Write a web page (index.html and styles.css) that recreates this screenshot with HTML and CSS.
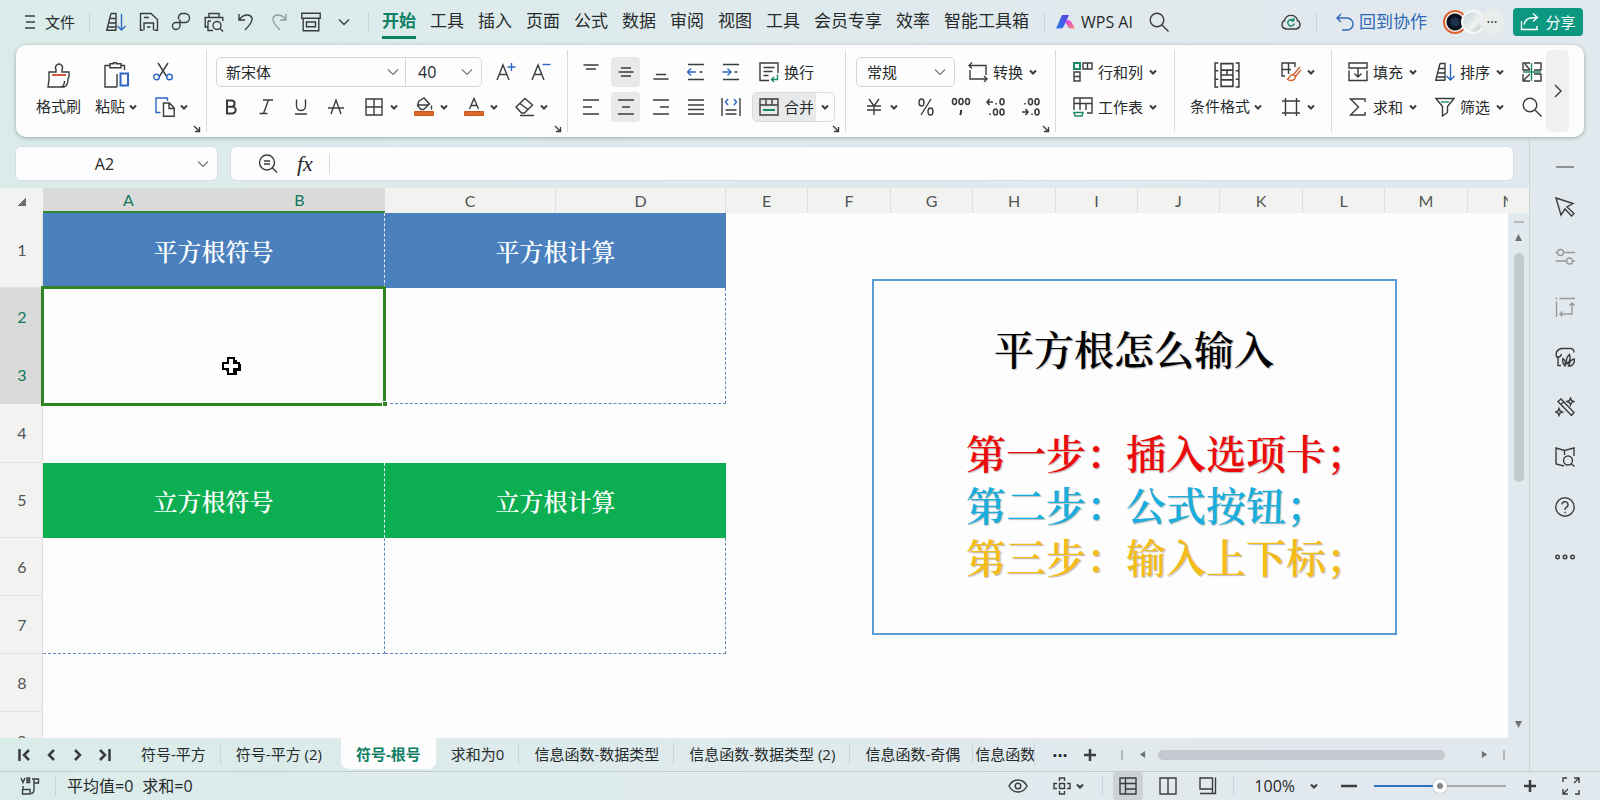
FILE: index.html
```html
<!DOCTYPE html>
<html lang="zh-CN">
<head>
<meta charset="utf-8">
<title>符号-根号</title>
<link rel="stylesheet" href="styles.css">
</head>
<body>
<svg class="sprite" aria-hidden="true">
  <symbol id="caret" viewBox="0 0 10 10"><path d="M2 3.5l3 3 3-3" stroke-width="2"/></symbol>
  <symbol id="chev" viewBox="0 0 12 12"><path d="M1 3.5l5 5 5-5"/></symbol>
  <symbol id="menu" viewBox="0 0 12 16"><path d="M1 2h10M2 8h9M1 14h10"/></symbol>
  <symbol id="sort" viewBox="0 0 20 20"><path d="M5 1.500h5v17M5 1.500L.700 18.300H10M4 6.500h6M2.700 11h7.300M1.700 15h8.300"/><path class="blue" d="M15.500 2v16M11.500 14l4 4 4-4"/></symbol>
  <symbol id="save" viewBox="0 0 20 20"><path d="M4 18.200H1.500V1.500h10.500l6.500 6v10.700H15.500M5 18.200V11h9.500v7.200M5 5.500h5M8 15h3.500"/></symbol>
  <symbol id="pout" viewBox="0 0 20 20"><path d="M7.500 7.500V5.500a4 4 0 0 1 4-4H14a4.500 4.500 0 0 1 0 9H5a3.500 3.500 0 0 0 0 7 4 4 0 0 0 4-4V7.500"/></symbol>
  <symbol id="print" viewBox="0 0 20 20"><path d="M5 5.500V1.500h10v4M4 15H1.200V5.500h17.600V9M4 9h3M4 9v9.500h5"/><circle cx="13" cy="13.500" r="4"/><path d="M16 16.500l3 3"/></symbol>
  <symbol id="undo" viewBox="0 0 20 20"><path d="M3 2v6h6M3.500 7.500C7 2 14.500 1.500 16 6c1 3.500-2 7-7 12"/></symbol>
  <symbol id="redo" viewBox="0 0 20 20"><path d="M17 2v6h-6M16.500 7.500C13 2 5.500 1.500 4 6c-1 3.500 2 7 7 12"/></symbol>
  <symbol id="archive" viewBox="0 0 20 20"><path d="M.800 1.200h18.400v5H.800zM2.200 6.200v12.600h15.600V6.200M5.500 10h9v4.800h-9z"/></symbol>
  <symbol id="search" viewBox="0 0 20 20"><circle cx="8" cy="8" r="6.800"/><path d="M13 13l6.500 6.500"/></symbol>
  <symbol id="cloud" viewBox="0 0 20 20"><path d="M5 17a4.500 4.500 0 0 1-1.500-8.500A6.700 6.700 0 0 1 16.500 8.500 4.500 4.500 0 0 1 15 17z"/><path class="green" d="M12.500 8.500a3.300 3.300 0 1 0 .800 3M9.800 8.800h3V6"/></symbol>
  <symbol id="back" viewBox="0 0 20 20"><path d="M6 2L2 6l4 4M2 6h10a6 6 0 0 1 0 12H7"/></symbol>
  <symbol id="share" viewBox="0 0 20 20"><path d="M1.500 9v8.500h15.500V14M4 12.500C5 7.500 8 5.500 17 5.500M13 1.500l4.500 4-4.500 4"/></symbol>
  <symbol id="brush" viewBox="0 0 24 26"><path d="M2 18l-1 7h16c3-1 4-4 4-8l1-2M2 18V10h7V7.500a3.500 3.500 0 1 1 6 0V10h7v5M14.500 25c2-1 3-3 3-6"/><path class="red" d="M5 13h14" stroke-width="2"/></symbol>
  <symbol id="paste" viewBox="0 0 26 26"><path d="M6 3.500H1v21.500h12M17 3.500h3.500V8M6 1.800h3.500V.800h3v1h4.500v4H6zM13 25V12"/><path class="blue" d="M16.500 11.500h7.500v12h-7.500z" stroke-width="2"/></symbol>
  <symbol id="cut" viewBox="0 0 20 20"><path d="M5 1l9 14M15 1L6 15"/><circle class="blue" cx="3.500" cy="15" r="2.800"/><circle class="blue" cx="16.500" cy="15" r="2.800"/></symbol>
  <symbol id="copy" viewBox="0 0 20 20"><path class="blue" d="M5.500 15.500H1V1h11.500v3"/><path d="M8.500 6h6l4.700 5v8.300H8.500zM14 6v5.500h5"/></symbol>
  <symbol id="aplus" viewBox="0 0 20 20"><path d="M1 18L7 3l6 15M3.500 12.500h7"/><path class="blue" d="M15.500 1v8M11.500 5h8"/></symbol>
  <symbol id="aminus" viewBox="0 0 20 20"><path d="M1 18L7 3l6 15M3.500 12.500h7"/><path class="blue" d="M11.500 2.500h8"/></symbol>
  <symbol id="bold" viewBox="0 0 20 20"><path d="M6 3.500h4.500a3 3 0 0 1 0 6.200H6zM6 9.700h5.300a3.300 3.300 0 0 1 0 6.800H6z" stroke-width="2"/></symbol>
  <symbol id="italic" viewBox="0 0 20 20"><path d="M7 3h10M3.500 16.500h8M12.500 3l-5 13.500"/></symbol>
  <symbol id="under" viewBox="0 0 20 20"><path d="M5.500 2.500V9a4.500 4.500 0 0 0 9 0V2.500M4 17h12"/></symbol>
  <symbol id="strike" viewBox="0 0 20 20"><path d="M5 17L10 3l5 14M2 11h16"/></symbol>
  <symbol id="borders" viewBox="0 0 20 20"><path d="M2 2h16v16H2zM10 2v16M2 10h16"/></symbol>
  <symbol id="bucket" viewBox="0 0 20 20"><path d="M5 4l5-3 5.500 6-6 5.500H7L3.500 8.500zM4 8h11M17.500 8.500v4"/><path class="fill-o" d="M.500 14.500h19v4H.500z"/></symbol>
  <symbol id="fcolor" viewBox="0 0 20 20"><path d="M5.500 12L10 1.500 14.500 12M7 8.500h6"/><path class="fill-o" d="M.500 14.500h19v4H.500z"/></symbol>
  <symbol id="eraser" viewBox="0 0 20 20"><path d="M2 10l9-8.500L18.500 8l-8 8H7.500zM6 6.500l8 6M6 18.500h14"/></symbol>
  <symbol id="vtop" viewBox="0 0 20 20"><path d="M2.500 3h15M5 7h10"/></symbol>
  <symbol id="vmid" viewBox="0 0 20 20"><path d="M5 6h10M2.500 10h15M5 14h10"/></symbol>
  <symbol id="vbot" viewBox="0 0 20 20"><path d="M5 12.500h10M2.500 17h15"/></symbol>
  <symbol id="outd" viewBox="0 0 20 20"><path d="M2 2.500h16M2 17.500h16M13.500 10h3"/><path class="blue" d="M1.500 10H10M5 6.500L1.500 10 5 13.500"/></symbol>
  <symbol id="ind" viewBox="0 0 20 20"><path d="M2 2.500h16M2 17.500h16M13.500 10h3"/><path class="blue" d="M1.500 10H10M6.500 6.500L10 10l-3.500 3.500"/></symbol>
  <symbol id="hl" viewBox="0 0 20 20"><path d="M2 3h16M2 10h9M2 17h16"/></symbol>
  <symbol id="hc" viewBox="0 0 20 20"><path d="M2 3h16M6 10h8M2 17h16"/></symbol>
  <symbol id="hr" viewBox="0 0 20 20"><path d="M2 3h16M9 10h9M2 17h16"/></symbol>
  <symbol id="hj" viewBox="0 0 20 20"><path d="M2 3h16M2 8h16M2 12.500h16M2 17h16"/></symbol>
  <symbol id="hd" viewBox="0 0 20 20"><path d="M1 1v18M19 1v18M4.500 13h11M4.500 17h11"/><path class="blue" d="M7 2L4.500 5 7 8M13 2l2.500 3L13 8"/></symbol>
  <symbol id="wrap" viewBox="0 0 20 20"><path d="M10 18.500H1V1h18v10M4.500 5.500h11M4.500 9.500h9M4.500 13.500h5"/><path class="green" d="M18.500 12.500v5h-6M15 15l-2.500 2.500L15 20"/></symbol>
  <symbol id="merge" viewBox="0 0 20 20"><path d="M1 2h18v16H1zM1 8h18M7 2v6M13 2v6"/><path class="green" d="M4 13h12" stroke-width="2"/></symbol>
  <symbol id="convert" viewBox="0 0 20 20"><path d="M4 .500L1 3.500l3 3M1 3.500h17V13M2 8v9h17M16 14l3 3-3 3"/></symbol>
  <symbol id="yen" viewBox="0 0 20 20"><path d="M5 2l5 7 5-7M3 9h14M3 13h14M10 9v9"/></symbol>
  <symbol id="percent" viewBox="0 0 20 20"><ellipse cx="5.500" cy="5.500" rx="2.500" ry="3.500"/><ellipse cx="14.500" cy="14.500" rx="2.500" ry="3.500"/><path d="M15 2L5 18"/></symbol>
  <symbol id="thou" viewBox="0 0 20 20"><g stroke-width="1.600"><ellipse cx="3.500" cy="4.500" rx="2" ry="3"/><ellipse cx="10" cy="4.500" rx="2" ry="3"/><ellipse cx="16.500" cy="4.500" rx="2" ry="3"/></g><path d="M10 13v3l-1 2" stroke-width="2"/></symbol>
  <symbol id="decup" viewBox="0 0 20 20"><g stroke-width="1.600"><path d="M1 5h6M3.500 2L1 5l2.500 3M10 6v1.500M4 16.500V18"/><ellipse cx="16" cy="4.800" rx="2" ry="3"/><ellipse cx="9.500" cy="15" rx="2" ry="3"/><ellipse cx="16" cy="15" rx="2" ry="3"/></g></symbol>
  <symbol id="decdn" viewBox="0 0 20 20"><g stroke-width="1.600"><path d="M1 15h6M4.500 12L7 15l-2.500 3M4 6v1.500M11 16.500V18"/><ellipse cx="9.500" cy="4.800" rx="2" ry="3"/><ellipse cx="16" cy="4.800" rx="2" ry="3"/><ellipse cx="16" cy="15" rx="2" ry="3"/></g></symbol>
  <symbol id="rowcol" viewBox="0 0 20 20"><path class="green" d="M1 1h6v6H1z" stroke-width="2"/><path d="M10 1h9v6h-9zM14.500 1v6M1 10h6v9H1zM1 14.500h6"/></symbol>
  <symbol id="wsheet" viewBox="0 0 20 20"><path d="M1 13V1h18v15h-5M1 6.500h18M7 1v12M13 6.500V13"/><path class="green" d="M1 15.500h9l-1 3.500H2z"/></symbol>
  <symbol id="cond" viewBox="0 0 24 24"><path d="M4 1H1v22h3M20 1h3v22h-3M6.500 1.500h11v6h-11zM6.500 7.500v9M12 7.500v4.500M6.500 12h11v4.500M17.500 7.500V12M6.500 16.500h11v6h-11zM1 8h3M1 16h3M20 8h3M20 16h3"/></symbol>
  <symbol id="tstyle" viewBox="0 0 20 20"><path d="M4 14H1V1h13v4M1 7.500h9M7.500 1v11"/><path class="orange" d="M19 5l-7 8M20 8l-6 7M12 12.500c-3 0-3.500 3-5.500 5 3 2 8 1 8-3z"/></symbol>
  <symbol id="cellf" viewBox="0 0 20 20"><path d="M4.500 1v18M15.500 1v18M1 4h18M1 16h18"/></symbol>
  <symbol id="fillc" viewBox="0 0 20 20"><path d="M1 1h18v5H1zM1 8.500V18.500h18V8.500M10 6v9M6.500 11.500L10 15l3.500-3.500"/></symbol>
  <symbol id="sum" viewBox="0 0 20 20"><path d="M17 5V2H2.500l8 8-8 8H17v-3"/></symbol>
  <symbol id="filter" viewBox="0 0 20 20"><path d="M1 1.500h18l-6.500 8v6l-5 3.500V9.500z"/><path class="green" d="M6 5h8"/></symbol>
  <symbol id="freeze" viewBox="0 0 20 20"><path d="M12 1h7v7h-7M8 1H1v7h7M1 12v7h7M12 12h7v7h-7M3 2l5 6M2 18l6-6"/><path class="green" d="M9.500 1v18M1 10h18"/></symbol>
  <symbol id="launch" viewBox="0 0 8 8"><path d="M1 1l5 5M6.500 2v4.500H2"/></symbol>
  <symbol id="zoomeq" viewBox="0 0 20 20"><circle cx="9" cy="8.500" r="7.500"/><path d="M6 7h6M6 10h6M14.500 14l4.500 4.500"/></symbol>
  <symbol id="pointer" viewBox="0 0 20 20"><path d="M1 1l17 5.500-6 3.500 7 6.500-2.500 2.500-6.500-7L6 18z"/></symbol>
  <symbol id="sliders" viewBox="0 0 20 20"><circle cx="5.500" cy="5.500" r="3"/><circle cx="14.500" cy="14" r="3"/><path d="M.500 5.500h2M8.500 5.500H20M.500 14h11M17.500 14H20"/></symbol>
  <symbol id="trans" viewBox="0 0 20 20"><path d="M.500 1.500h2M4.500 1.500H20M1.500 4.500V20M17 6v11H5M14.500 8.500L17 6l2.500 2.500M7.500 14.500L5 17l2.500 2.500"/></symbol>
  <symbol id="elephant" viewBox="0 0 20 20"><path d="M6 18.500H3V11C0 9.500.500 4 4 2.500l2-1h9.500c2.500 0 3.500 1.500 3.500 4M1.500 9.500c3 1.500 4.500-.500 5-2.500M8 11.500c-1 3 0 5.500 2 7.500 1-3 0-6-2-7.500zM14.500 7.500c-3 2.500-3.500 6.500-2.500 9.500 3-2 3.500-6 2.500-9.500zM19.500 12c-3 0-5 3-6 7 4 0 6-3 6-7z"/></symbol>
  <symbol id="wand" viewBox="0 0 20 20"><path d="M3 4.500L6 2l13 13.500-2.500 3zM5.500 7.500L9 5M15.500 1l1 2.500 2.500 1-2.500 1-1 2.500-1-2.500-2.500-1 2.500-1zM4 11.500l1 2.500 2.500 1L5 16l-1 2.500L3 16l-2.500-1L3 14z"/></symbol>
  <symbol id="book" viewBox="0 0 20 20"><path d="M9 19l-8-2V1l8.500 2.500L19 1v8M9.500 3.500V8"/><circle cx="13" cy="13.500" r="4.500"/><path d="M16.500 17l3 2.500"/></symbol>
  <symbol id="help" viewBox="0 0 20 20"><circle cx="10" cy="10" r="9.200"/><path d="M7 7.500a3 3 0 1 1 4 3c-1 .500-1 1-1 2.500M10 14.800v1.500"/></symbol>
  <symbol id="dots" viewBox="0 0 20 20"><circle cx="2.500" cy="10" r="1.800"/><circle cx="10" cy="10" r="1.800"/><circle cx="17.500" cy="10" r="1.800"/></symbol>
  <symbol id="first" viewBox="0 0 12 12"><path d="M1.500 0v12M11 1L6 6l5 5" stroke-width="2.500"/></symbol>
  <symbol id="prev" viewBox="0 0 12 12"><path d="M9 1L4 6l5 5" stroke-width="2.500"/></symbol>
  <symbol id="next" viewBox="0 0 12 12"><path d="M3 1l5 5-5 5" stroke-width="2.500"/></symbol>
  <symbol id="last" viewBox="0 0 12 12"><path d="M10.500 0v12M1 1l5 5-5 5" stroke-width="2.500"/></symbol>
  <symbol id="plus" viewBox="0 0 12 12"><path d="M6 0v12M0 6h12" stroke-width="2.500"/></symbol>
  <symbol id="minus" viewBox="0 0 16 12"><path d="M0 6h16" stroke-width="2.500"/></symbol>
  <symbol id="vbj" viewBox="0 0 20 20"><path d="M1 2l2 4.500L5 2M7 2h2.500v4.500H7zM7 4.200h2.500M12 3h6.500v4H14M14 3v10c0 3-1 4.500-3 4.500M3 10v3.500h7V18H2.500v-4.500"/></symbol>
  <symbol id="eye" viewBox="0 0 20 20"><path d="M1 10c4-8 14-8 18 0-4 8-14 8-18 0z"/><circle cx="10" cy="10" r="2.800"/></symbol>
  <symbol id="cross" viewBox="0 0 20 20"><path d="M7.500 5V2h5v3M7.500 15v3h5v-3M5 7.500H2v5h3M15 7.500h3v5h-3M7.500 7.500h5v5h-5z"/></symbol>
  <symbol id="vnorm" viewBox="0 0 20 20"><path d="M2 2h16v16H2zM2 7.500h16M7.500 2v16M7.500 13H18"/></symbol>
  <symbol id="vpage" viewBox="0 0 20 20"><path d="M2 2h16v16H2zM10 2v16"/></symbol>
  <symbol id="vread" viewBox="0 0 20 20"><path d="M2 2h12.500v11H2zM17.500 1.500v16H2M14.500 13v4.500"/></symbol>
  <symbol id="full" viewBox="0 0 20 20"><path d="M2 6V2h4M18 14v4h-4M13 2h5v5M18 2l-5 5M7 18H2v-5M2 18l5-5"/></symbol>
</svg>

<header class="topbar">
  <button class="file"><svg class="m"><use href="#menu"/></svg>文件</button>
  <span class="sep"></span>
  <div class="quick">
    <button aria-label="排序"><svg><use href="#sort"/></svg></button>
    <button aria-label="保存"><svg><use href="#save"/></svg></button>
    <button aria-label="输出"><svg><use href="#pout"/></svg></button>
    <button aria-label="打印预览"><svg><use href="#print"/></svg></button>
    <button aria-label="撤销"><svg><use href="#undo"/></svg></button>
    <button aria-label="恢复" class="dim"><svg><use href="#redo"/></svg></button>
    <button aria-label="归档"><svg><use href="#archive"/></svg></button>
    <button aria-label="更多"><svg class="s12"><use href="#chev"/></svg></button>
  </div>
  <span class="sep"></span>
  <nav class="menu">
    <a href="#" class="on">开始</a><a href="#">工具</a><a href="#">插入</a><a href="#">页面</a><a href="#">公式</a><a href="#">数据</a><a href="#">审阅</a><a href="#">视图</a><a href="#">工具</a><a href="#">会员专享</a><a href="#">效率</a><a href="#">智能工具箱</a>
  </nav>
  <span class="sep"></span>
  <button class="ai">
    <svg viewBox="0 0 20 16"><defs><linearGradient id="g1" x1="0" y1="1" x2="1" y2="0"><stop offset="0" stop-color="#2f7df0"/><stop offset="1" stop-color="#5b3fe0"/></linearGradient><linearGradient id="g2" x1="0" y1="0" x2="1" y2="1"><stop offset="0" stop-color="#d63ff0"/><stop offset="1" stop-color="#ff8a6a"/></linearGradient></defs><path class="plain" fill="url(#g1)" d="M6 1h7L8 12c-1 2-2 2.500-3 2.500H0z"/><path class="plain" fill="url(#g2)" d="M11 6c3 0 4 1 5 3l3 5.500h-4c-2 0-3-1-3.500-2.500L9.500 8z"/></svg>WPS AI</button>
  <button class="find" aria-label="搜索"><svg><use href="#search"/></svg></button>
  <div class="account">
    <button aria-label="云同步"><svg><use href="#cloud"/></svg></button>
    <span class="sep"></span>
    <button class="collab"><svg><use href="#back"/></svg>回到协作</button>
    <div class="avatars"><span class="av one"></span><span class="av two"></span><span class="av more">···</span></div>
    <button class="share"><svg><use href="#share"/></svg>分享</button>
  </div>
</header>

<section class="ribbon">
  <div class="group clip">
    <button class="big brush"><svg><use href="#brush"/></svg><span>格式刷</span></button>
    <button class="big"><svg><use href="#paste"/></svg><span>粘贴<svg class="c"><use href="#caret"/></svg></span></button>
    <div class="rows">
      <div class="row"><button class="ib" aria-label="剪切"><svg><use href="#cut"/></svg></button></div>
      <div class="row"><button class="split" aria-label="复制"><svg><use href="#copy"/></svg><svg class="c"><use href="#caret"/></svg></button></div>
    </div>
    <svg class="launch"><use href="#launch"/></svg>
  </div>
  <div class="group font">
    <div class="rows">
      <div class="row">
        <div class="combo">
          <label class="pick name"><select aria-label="字体"><option>新宋体</option></select><svg class="s12"><use href="#chev"/></svg></label>
          <label class="pick size"><select aria-label="字号"><option>40</option></select><svg class="s12"><use href="#chev"/></svg></label>
        </div>
        <button class="ib" aria-label="增大字号"><svg><use href="#aplus"/></svg></button>
        <button class="ib" aria-label="减小字号"><svg><use href="#aminus"/></svg></button>
      </div>
      <div class="row">
        <button class="ib" aria-label="加粗"><svg><use href="#bold"/></svg></button>
        <button class="ib" aria-label="倾斜"><svg><use href="#italic"/></svg></button>
        <button class="ib" aria-label="下划线"><svg><use href="#under"/></svg></button>
        <button class="ib last" aria-label="删除线"><svg><use href="#strike"/></svg></button>
        <button class="split" aria-label="边框"><svg><use href="#borders"/></svg><svg class="c"><use href="#caret"/></svg></button>
        <button class="split" aria-label="填充颜色"><svg><use href="#bucket"/></svg><svg class="c"><use href="#caret"/></svg></button>
        <button class="split" aria-label="字体颜色"><svg><use href="#fcolor"/></svg><svg class="c"><use href="#caret"/></svg></button>
        <button class="split" aria-label="清除"><svg><use href="#eraser"/></svg><svg class="c"><use href="#caret"/></svg></button>
      </div>
    </div>
    <svg class="launch"><use href="#launch"/></svg>
  </div>
  <div class="group align">
    <div class="rows">
      <div class="row">
        <button class="ib" aria-label="顶端对齐"><svg><use href="#vtop"/></svg></button>
        <button class="ib on" aria-label="垂直居中"><svg><use href="#vmid"/></svg></button>
        <button class="ib" aria-label="底端对齐"><svg><use href="#vbot"/></svg></button>
        <button class="ib" aria-label="减少缩进"><svg><use href="#outd"/></svg></button>
        <button class="ib" aria-label="增加缩进"><svg><use href="#ind"/></svg></button>
        <button class="lab wrapb"><svg><use href="#wrap"/></svg>换行</button>
      </div>
      <div class="row">
        <button class="ib" aria-label="左对齐"><svg><use href="#hl"/></svg></button>
        <button class="ib on" aria-label="水平居中"><svg><use href="#hc"/></svg></button>
        <button class="ib" aria-label="右对齐"><svg><use href="#hr"/></svg></button>
        <button class="ib" aria-label="两端对齐"><svg><use href="#hj"/></svg></button>
        <button class="ib" aria-label="分散对齐"><svg><use href="#hd"/></svg></button>
        <div class="mergebox"><button class="lab"><svg><use href="#merge"/></svg>合并</button><button class="drop" aria-label="合并选项"><svg class="c"><use href="#caret"/></svg></button></div>
      </div>
    </div>
    <svg class="launch"><use href="#launch"/></svg>
  </div>
  <div class="group num">
    <div class="rows">
      <div class="row">
        <label class="pick fmt"><select aria-label="数字格式"><option>常规</option></select><svg class="s12"><use href="#chev"/></svg></label>
        <button class="lab conv"><svg><use href="#convert"/></svg>转换<svg class="c"><use href="#caret"/></svg></button>
      </div>
      <div class="row">
        <button class="split yen" aria-label="货币"><svg><use href="#yen"/></svg><svg class="c"><use href="#caret"/></svg></button>
        <button class="ib" aria-label="百分比"><svg><use href="#percent"/></svg></button>
        <button class="ib" aria-label="千位分隔"><svg><use href="#thou"/></svg></button>
        <button class="ib" aria-label="增加小数位"><svg><use href="#decup"/></svg></button>
        <button class="ib" aria-label="减少小数位"><svg><use href="#decdn"/></svg></button>
      </div>
    </div>
    <svg class="launch"><use href="#launch"/></svg>
  </div>
  <div class="group cells">
    <div class="rows">
      <div class="row"><button class="lab"><svg><use href="#rowcol"/></svg>行和列<svg class="c"><use href="#caret"/></svg></button></div>
      <div class="row"><button class="lab"><svg><use href="#wsheet"/></svg>工作表<svg class="c"><use href="#caret"/></svg></button></div>
    </div>
  </div>
  <div class="group style">
    <button class="big"><svg><use href="#cond"/></svg><span>条件格式<svg class="c"><use href="#caret"/></svg></span></button>
    <div class="rows">
      <div class="row"><button class="split" aria-label="表格样式"><svg><use href="#tstyle"/></svg><svg class="c"><use href="#caret"/></svg></button></div>
      <div class="row"><button class="split" aria-label="单元格样式"><svg><use href="#cellf"/></svg><svg class="c"><use href="#caret"/></svg></button></div>
    </div>
  </div>
  <div class="group edit">
    <div class="rows">
      <div class="row"><button class="lab"><svg><use href="#fillc"/></svg>填充<svg class="c"><use href="#caret"/></svg></button><button class="lab"><svg><use href="#sort"/></svg>排序<svg class="c"><use href="#caret"/></svg></button><button class="ib" aria-label="冻结"><svg><use href="#freeze"/></svg></button></div>
      <div class="row"><button class="lab"><svg><use href="#sum"/></svg>求和<svg class="c"><use href="#caret"/></svg></button><button class="lab"><svg><use href="#filter"/></svg>筛选<svg class="c"><use href="#caret"/></svg></button><button class="ib" aria-label="查找"><svg><use href="#search"/></svg></button></div>
    </div>
  </div>
  <button class="scroll" aria-label="更多功能"><svg viewBox="0 0 10 16"><path d="M2 2l6 6-6 6"/></svg></button>
</section>

<main class="work">
  <div class="book">
    <div class="fbar">
      <div class="namebox"><input aria-label="名称框" value="A2"><svg class="s12"><use href="#chev"/></svg></div>
      <div class="formula"><svg><use href="#zoomeq"/></svg><span class="fx">fx</span><input aria-label="编辑栏" value=""></div>
    </div>
    <div class="sheet">
      <div class="view">
        <table>
          <colgroup><col class="rh"><col class="w"><col class="w"><col class="w"><col class="v"><col class="n"><col class="o"><col class="n"><col class="o"><col class="n"><col class="n"><col class="o"><col class="n"><col class="o"><col class="n"></colgroup>
          <thead><tr><th class="corner"></th><th class="sel">A</th><th class="sel">B</th><th>C</th><th>D</th><th>E</th><th>F</th><th>G</th><th>H</th><th>I</th><th>J</th><th>K</th><th>L</th><th>M</th><th>N</th></tr></thead>
          <tbody>
            <tr class="tall"><th>1</th><td colspan="2" class="blueh left">平方根符号</td><td colspan="2" class="blueh">平方根计算</td><td colspan="10"></td></tr>
            <tr><th class="sel">2</th><td colspan="2" rowspan="2" class="active"><div class="range"><i></i></div></td><td colspan="2" rowspan="2" class="dash"></td><td colspan="10"></td></tr>
            <tr><th class="sel">3</th><td colspan="10"></td></tr>
            <tr class="mid"><th>4</th><td colspan="14"></td></tr>
            <tr class="tall"><th>5</th><td colspan="2" class="greenh left">立方根符号</td><td colspan="2" class="greenh">立方根计算</td><td colspan="10"></td></tr>
            <tr><th>6</th><td colspan="2" rowspan="2" class="dash"></td><td colspan="2" rowspan="2" class="dash"></td><td colspan="10"></td></tr>
            <tr><th>7</th><td colspan="10"></td></tr>
            <tr><th>8</th><td colspan="14"></td></tr>
            <tr><th>9</th><td colspan="14"></td></tr>
          </tbody>
        </table>
        <div class="note">
          <p class="title">平方根怎么输入</p>
          <p class="s1">第一步：插入选项卡；</p>
          <p class="s2">第二步：公式按钮；</p>
          <p class="s3">第三步：输入上下标；</p>
        </div>
        <svg class="cursor" viewBox="0 0 20 20"><path class="plain" d="M8 3h7v4h4v7h-4v4H8v-4H4V7h4z" fill="#000"/><path d="M6 1h6v5h5v6h-5v5H6v-5H1V6h5z" fill="#fff" stroke="#000" stroke-width="2"/></svg>
      </div>
      <div class="vscroll"><span class="grip"></span><svg viewBox="0 0 8 8"><path class="plain" d="M0 8l4-8 4 8z"/></svg><span class="thumb"></span><svg class="down" viewBox="0 0 8 8"><path class="plain" d="M0 0h8L4 8z"/></svg></div>
    </div>
    <div class="tabs">
      <div class="tnav">
        <button aria-label="第一张"><svg class="s12"><use href="#first"/></svg></button><button aria-label="上一张"><svg class="s12"><use href="#prev"/></svg></button><button aria-label="下一张"><svg class="s12"><use href="#next"/></svg></button><button aria-label="最后一张"><svg class="s12"><use href="#last"/></svg></button>
      </div>
      <div class="tlist">
        <button>符号-平方</button><button class="wide">符号-平方 (2)</button><button class="on">符号-根号</button><button>求和为0</button><button>信息函数-数据类型</button><button>信息函数-数据类型 (2)</button><button class="snug">信息函数-奇偶</button><button class="cut">信息函数</button>
      </div>
      <button class="tmore">···</button>
      <button class="tadd" aria-label="新建工作表"><svg class="s12"><use href="#plus"/></svg></button>
      <div class="hscroll"><i></i><svg viewBox="0 0 8 8"><path class="plain" d="M7 0v8L1 4z"/></svg><span class="thumb"></span><svg viewBox="0 0 8 8"><path class="plain" d="M1 0v8l6-4z"/></svg><i></i></div>
    </div>
  </div>
  <aside class="side">
    <button class="fold" aria-label="收起"><i></i></button>
    <button aria-label="选择"><svg><use href="#pointer"/></svg></button>
    <button class="dim" aria-label="属性"><svg><use href="#sliders"/></svg></button>
    <button class="dim" aria-label="变换"><svg><use href="#trans"/></svg></button>
    <button aria-label="分析"><svg><use href="#elephant"/></svg></button>
    <button aria-label="美化"><svg><use href="#wand"/></svg></button>
    <button aria-label="资料"><svg><use href="#book"/></svg></button>
    <button aria-label="帮助"><svg><use href="#help"/></svg></button>
    <button aria-label="更多"><svg><use href="#dots"/></svg></button>
  </aside>
</main>

<footer class="status">
  <svg><use href="#vbj"/></svg>
  <span class="sep"></span>
  <span class="stats"><span>平均值=0</span><span>求和=0</span></span>
  <div class="views">
    <button aria-label="护眼"><svg><use href="#eye"/></svg></button>
    <button class="focus" aria-label="阅读"><svg><use href="#cross"/></svg><svg class="c"><use href="#caret"/></svg></button>
    <span class="sep"></span>
    <button class="vw on" aria-label="普通视图"><svg><use href="#vnorm"/></svg></button>
    <button class="vw" aria-label="分页预览"><svg><use href="#vpage"/></svg></button>
    <button class="vw" aria-label="阅读视图"><svg><use href="#vread"/></svg></button>
    <span class="sep"></span>
    <button class="pct">100%<svg class="c"><use href="#caret"/></svg></button>
    <button aria-label="缩小"><svg class="min"><use href="#minus"/></svg></button>
    <input type="range" aria-label="缩放" min="0" max="100" value="50">
    <button aria-label="放大"><svg class="s12"><use href="#plus"/></svg></button>
    <button class="fullb" aria-label="全屏"><svg><use href="#full"/></svg></button>
  </div>
</footer>
</body>
</html>
```
FILE: styles.css
```css
* { box-sizing: border-box; }
body {
  margin: 0; height: 100vh; overflow: hidden; display: flex; flex-direction: column;
  font: 15px/20px "Open Sans", "Noto Sans CJK SC", sans-serif; color: #262a2a;
  background: linear-gradient(90deg, #daece9, #dfeaed 50%, #e2e9ee 80%);
}
button, input, select { font: inherit; color: inherit; border: 0; padding: 0; margin: 0; background: none; outline: 0; }
button { display: flex; align-items: center; justify-content: center; white-space: nowrap; flex: none; }
svg { width: 20px; height: 20px; flex: none; display: block; fill: none; stroke: #3a3d3d; stroke-width: 1.4; }
.sprite { position: absolute; width: 0; height: 0; }
.blue { stroke: #2f68c4; }
.green { stroke: #1c8a62; }
.red { stroke: #d8583c; }
.orange { stroke: #d0622c; }
.fill-o { fill: #e0662a; stroke: #c9581f; stroke-width: 1; }
.plain { stroke: none; }
svg.c { width: 10px; height: 10px; }
svg.s12 { width: 12px; height: 12px; }
.dim { opacity: .45; }
.sep { width: 1px; height: 20px; background: #c6d3dc; flex: none; }

/* top bar */
.topbar { height: 45px; padding-bottom: 2px; display: flex; align-items: center; flex: none; }
.file { margin: 0 14px 0 24px; gap: 9px; }
.file .m { width: 12px; height: 16px; }
.quick { width: 248px; margin: 0 14px 0 16px; display: flex; justify-content: space-between; flex: none; }
.quick button { width: 20px; height: 20px; }
.menu { display: flex; gap: 14px; margin: 0 15px 0 13px; font-size: 17px; line-height: 28px; flex: none; }
.menu a { color: inherit; text-decoration: none; padding-top: 2px; height: 34px; border-bottom: 3px solid transparent; }
.menu a.on { color: #0d7f63; font-weight: 700; border-color: #0d7f63; }
.ai { margin-left: 11px; gap: 5px; font-size: 16px; }
.ai svg { height: 16px; }
.find { margin-left: 16px; }
.account { margin-left: auto; display: flex; align-items: center; padding-right: 17px; }
.account .sep { margin: 0 18px 0 15px; }
.collab { gap: 4px; color: #2f68b8; font-size: 17px; }
.collab svg { stroke: #2f68b8; }
.avatars { display: flex; margin: 0 9px 0 16px; }
.av { width: 24px; height: 24px; border-radius: 50%; }
.one { border: 2px solid #dd6230; background: radial-gradient(circle, #1d3350 0 3px, #0a0f1c 6px 8px, #fff 9px); }
.two { border: 2px solid #f6f8f8; background: linear-gradient(135deg, #c3d6da, #eef2ee 60%, #aebfc4); margin-left: -6px; }
.more { background: #e9eeec; margin-left: -5px; line-height: 24px; text-align: center; font-size: 14px; }
.share { width: 70px; height: 28px; gap: 5px; border-radius: 4px; background: #0c9880; color: #fff; }
.share svg { stroke: #fff; }

/* ribbon */
.ribbon { margin: 0 16px; height: 92px; background: #fdfdfe; border-radius: 10px; box-shadow: 0 1px 4px #9aaaaa; display: flex; flex: none; position: relative; padding-right: 15px; }
.group { position: relative; display: flex; padding-top: 12px; flex: none; }
.group + .group::before { content: ""; position: absolute; left: 0; top: 5px; height: 82px; border-left: 1px solid #d9dcde; }
.rows { display: flex; flex-direction: column; gap: 5px; }
.row { display: flex; height: 30px; align-items: center; }
.launch { position: absolute; right: 5px; bottom: 4px; width: 8px; height: 8px; }
.big { flex-direction: column; gap: 8px; height: 62px; justify-content: flex-start; padding-top: 5px; }
.big > svg { width: 26px; height: 26px; }
.big span { display: flex; align-items: center; gap: 3px; }
.big span svg { margin-top: 2px; }
.ib { width: 29px; height: 30px; margin: 0 3px; border-radius: 4px; }
.ib.on, .mergebox .lab { background: #e8e9ea; }
.split { width: 50px; height: 30px; gap: 5px; }
.lab { height: 30px; gap: 5px; }
.clip { width: 190px; padding-left: 20px; }
.clip .brush { margin-right: 14px; }
.clip .rows { margin-left: 7px; }
.clip .split { width: 48px; gap: 4px; margin-left: 3px; }
.font { width: 361px; padding-left: 7px; }
.font .last { margin-right: 6px; }
.combo { width: 266px; height: 30px; margin: 0 6px 0 3px; border: 1px solid #d3d7dc; border-radius: 5px; display: flex; }
.pick { position: relative; display: flex; align-items: center; }
.pick select { appearance: none; width: 100%; height: 28px; padding-left: 9px; }
.pick > svg { position: absolute; right: 8px; pointer-events: none; }
.pick > svg, .namebox svg { stroke: #777; stroke-width: 1.2; }
.pick.name { flex: 1; }
.pick.name > svg { right: 6px; }
.pick.size { width: 76px; border-left: 1px solid #d3d7dc; }
.pick.size select { padding-left: 12px; font-size: 16px; }
.align { width: 278px; padding-left: 6px; }
.wrapb { margin-left: 11px; }
.mergebox { display: flex; margin-left: 4px; border: 1px solid #d9dbdc; border-radius: 5px; overflow: hidden; height: 30px; }
.mergebox .lab { padding: 0 2px 0 6px; height: 28px; }
.drop { width: 18px; }
.num { width: 210px; padding-left: 11px; }
.pick.fmt { width: 99px; height: 30px; border: 1px solid #d3d7dc; border-radius: 5px; margin-right: 13px; }
.pick.fmt select { padding-left: 10px; }
.yen { width: 50px; margin-right: 2px; }
.cells { width: 119px; padding-left: 18px; }
.style { width: 157px; padding-left: 16px; }
.style .rows { margin-left: 10px; }
.edit { padding-left: 17px; }
.edit .lab { margin-right: 17px; }
.edit .ib { margin: 0 0 0 -5px; }
.scroll { width: 23px; height: 82px; margin: 5px 0 0 auto; background: #eff0f0; border-radius: 5px; }
.scroll svg { width: 10px; height: 16px; }

/* workbook */
.work { flex: 1; min-height: 0; display: flex; padding-top: 1px; }
.book { flex: 1; min-width: 0; display: flex; flex-direction: column; border-right: 1px solid #c9d8d2; }
.fbar { display: flex; gap: 12px; padding: 8px 15px 7px; flex: none; }
.namebox, .formula { height: 35px; background: #fdfdfe; border: 1px solid #d6dde8; border-radius: 6px; display: flex; align-items: center; }
.namebox { width: 203px; padding-right: 8px; }
.namebox input { flex: 1; min-width: 0; text-align: center; font-size: 16px; padding-right: 4px; }
.formula { flex: 1; padding-left: 27px; }
.fx { font: italic 22px/24px "Liberation Serif", serif; margin: 0 16px 0 19px; }
.formula input { flex: 1; border-left: 1px solid #d6d8da; height: 20px; }
.sheet { flex: 1; min-height: 0; display: flex; background: linear-gradient(#f2f3f1 25px, transparent 25px); }
.view { flex: 1; min-width: 0; position: relative; overflow: hidden; background: #fdfdfe; }
table { table-layout: fixed; width: 1550px; border-collapse: separate; border-spacing: 0; }
.rh { width: 43px; } .w { width: 171px; } .v { width: 170px; } .n { width: 82px; } .o { width: 83px; }
th { font: 400 16px/20px Lato, sans-serif; color: #505454; padding: 0; background: #f2f3f1; }
thead th { height: 25px; border-right: 1px solid #dcdedd; }
th.sel { background: #d9dad9; color: #14785c; }
thead th.sel { border-right: 0; border-bottom: 2px solid #33872f; }
thead .corner { border: 0; background: linear-gradient(135deg, transparent 50%, #6d7070 50%) 18px 10px / 8px 8px no-repeat #f2f3f1; }
tbody th { border-right: 1px solid #dcdedd; border-bottom: 1px solid #e0e0e6; padding-left: 2px; }
tbody th.sel { border-bottom-color: #d9dad9; }
tbody tr { height: 58px; }
tbody tr.tall { height: 75px; }
tbody tr.mid { height: 59px; }
td { padding: 0; }
.blueh, .greenh { text-align: center; color: #fff; font: 600 24px/32px "Noto Serif CJK SC", "Noto Serif SC", "Noto Sans CJK SC", serif; }
.blueh { background: #4a80bd; }
.greenh { background: #0bae50; }
.left { border-right: 1px dashed #e8eef5; }
.dash { border-right: 1px dashed #6288b8; border-bottom: 1px dashed #6288b8; }
.active { position: relative; }
.range { position: absolute; inset: -2px -1px -2px -2px; border: 3px solid #2f8524; }
.range i { position: absolute; right: -5px; bottom: -4px; width: 6px; height: 6px; background: #2f8524; border: 1px solid #fff; }
.note { position: absolute; left: 872px; top: 91px; width: 525px; height: 356px; border: 2px solid #5b9bd5; font: 600 40px/52px "Noto Serif CJK SC", "Noto Serif SC", "Noto Sans CJK SC", serif; }
.note p { margin: 0 0 0 92px; text-shadow: 1px 1px 1px #bbb; white-space: nowrap; }
.note .title { margin: 41px 0 52px 120px; color: #000; }
.note .s1 { color: #ec0a0a; }
.note .s2 { color: #19aedd; }
.note .s3 { color: #f4bc18; }
.cursor { position: absolute; left: 222px; top: 169px; }
.vscroll { width: 21px; margin-top: 25px; display: flex; flex-direction: column; align-items: center; }
.vscroll svg, .hscroll svg { width: 7px; height: 7px; fill: #6d7272; }
.grip { width: 10px; height: 2px; background: #b5babc; margin: 8px 0 11px; }
.vscroll .thumb { width: 10px; height: 229px; margin-top: 12px; border-radius: 5px; background: #c3cbcb; }
.down { margin: auto 0 10px; }

/* sheet tabs */
.tabs { height: 33px; display: flex; align-items: center; flex: none; }
.tnav { display: flex; gap: 15px; padding: 0 15px 0 18px; }
.tlist { display: flex; height: 33px; overflow: hidden; flex: none; width: 912px; }
.tlist button { padding: 0 15px; height: 31px; position: relative; }
.tlist button:not(.on)::after { content: ""; position: absolute; right: 0; top: 5px; height: 22px; border-right: 1px solid #cbd6da; }
.tlist .wide { padding-right: 19px; }
.tlist .wide::after { display: none; }
.tlist .on { background: #fdfdfe; color: #0d7f63; font-weight: 700; border-radius: 0 0 8px 8px; }
.tlist .snug { padding-right: 13px; }
.tlist .cut { padding: 0 0 0 2px; }
.tmore { margin-left: 12px; width: 20px; font-weight: 700; font-size: 18px; }
.tadd { margin-left: 14px; width: 12px; }
.hscroll { flex: 1; display: flex; align-items: center; padding: 0 24px 0 25px; }
.hscroll i { width: 2px; height: 10px; background: #b0b5b8; }
.hscroll svg:nth-child(2) { margin: 0 12px 0 16px; }
.hscroll .thumb { flex: 1; height: 10px; border-radius: 5px; background: #c5c9cf; margin-right: 36px; }
.hscroll i:last-child { margin-left: 15px; }

/* side panel */
.side { width: 70px; flex: none; display: flex; flex-direction: column; align-items: center; gap: 30px; padding: 19px 0 0; }
.side .fold { height: 20px; margin-bottom: -10px; }
.fold i { width: 18px; height: 2px; background: #8d9396; }

/* status bar */
.status { height: 29px; border-top: 1px solid #bfcdc6; display: flex; align-items: center; padding-left: 20px; flex: none; }
.status > .sep { margin: 0 11px 0 15px; }
.stats { display: flex; gap: 9px; font-size: 16px; }
.views { margin-left: auto; display: flex; align-items: center; padding-right: 19px; }
.focus { margin: 0 17px 0 24px; gap: 3px; }
.vw { width: 30px; height: 28px; margin-right: 10px; border-radius: 4px; }
.sep + .vw { margin-left: 10px; }
.vw.on { background: #ccd1d3; }
.vw + .sep { margin-right: 20px; }
.pct { gap: 14px; margin-right: 22px; font-size: 16px; }
.min { width: 16px; height: 12px; }
.views input { appearance: none; width: 132px; height: 20px; margin: 0 18px 0 17px; background: linear-gradient(90deg, #2f72c8 50%, #a6abb0 50%) center / 100% 2px no-repeat; }
.views input::-webkit-slider-thumb { appearance: none; width: 14px; height: 14px; border-radius: 50%; border: 4px solid #fff; background: #808588; box-shadow: 0 0 2px #999; }
.fullb { margin-left: 25px; }
```
